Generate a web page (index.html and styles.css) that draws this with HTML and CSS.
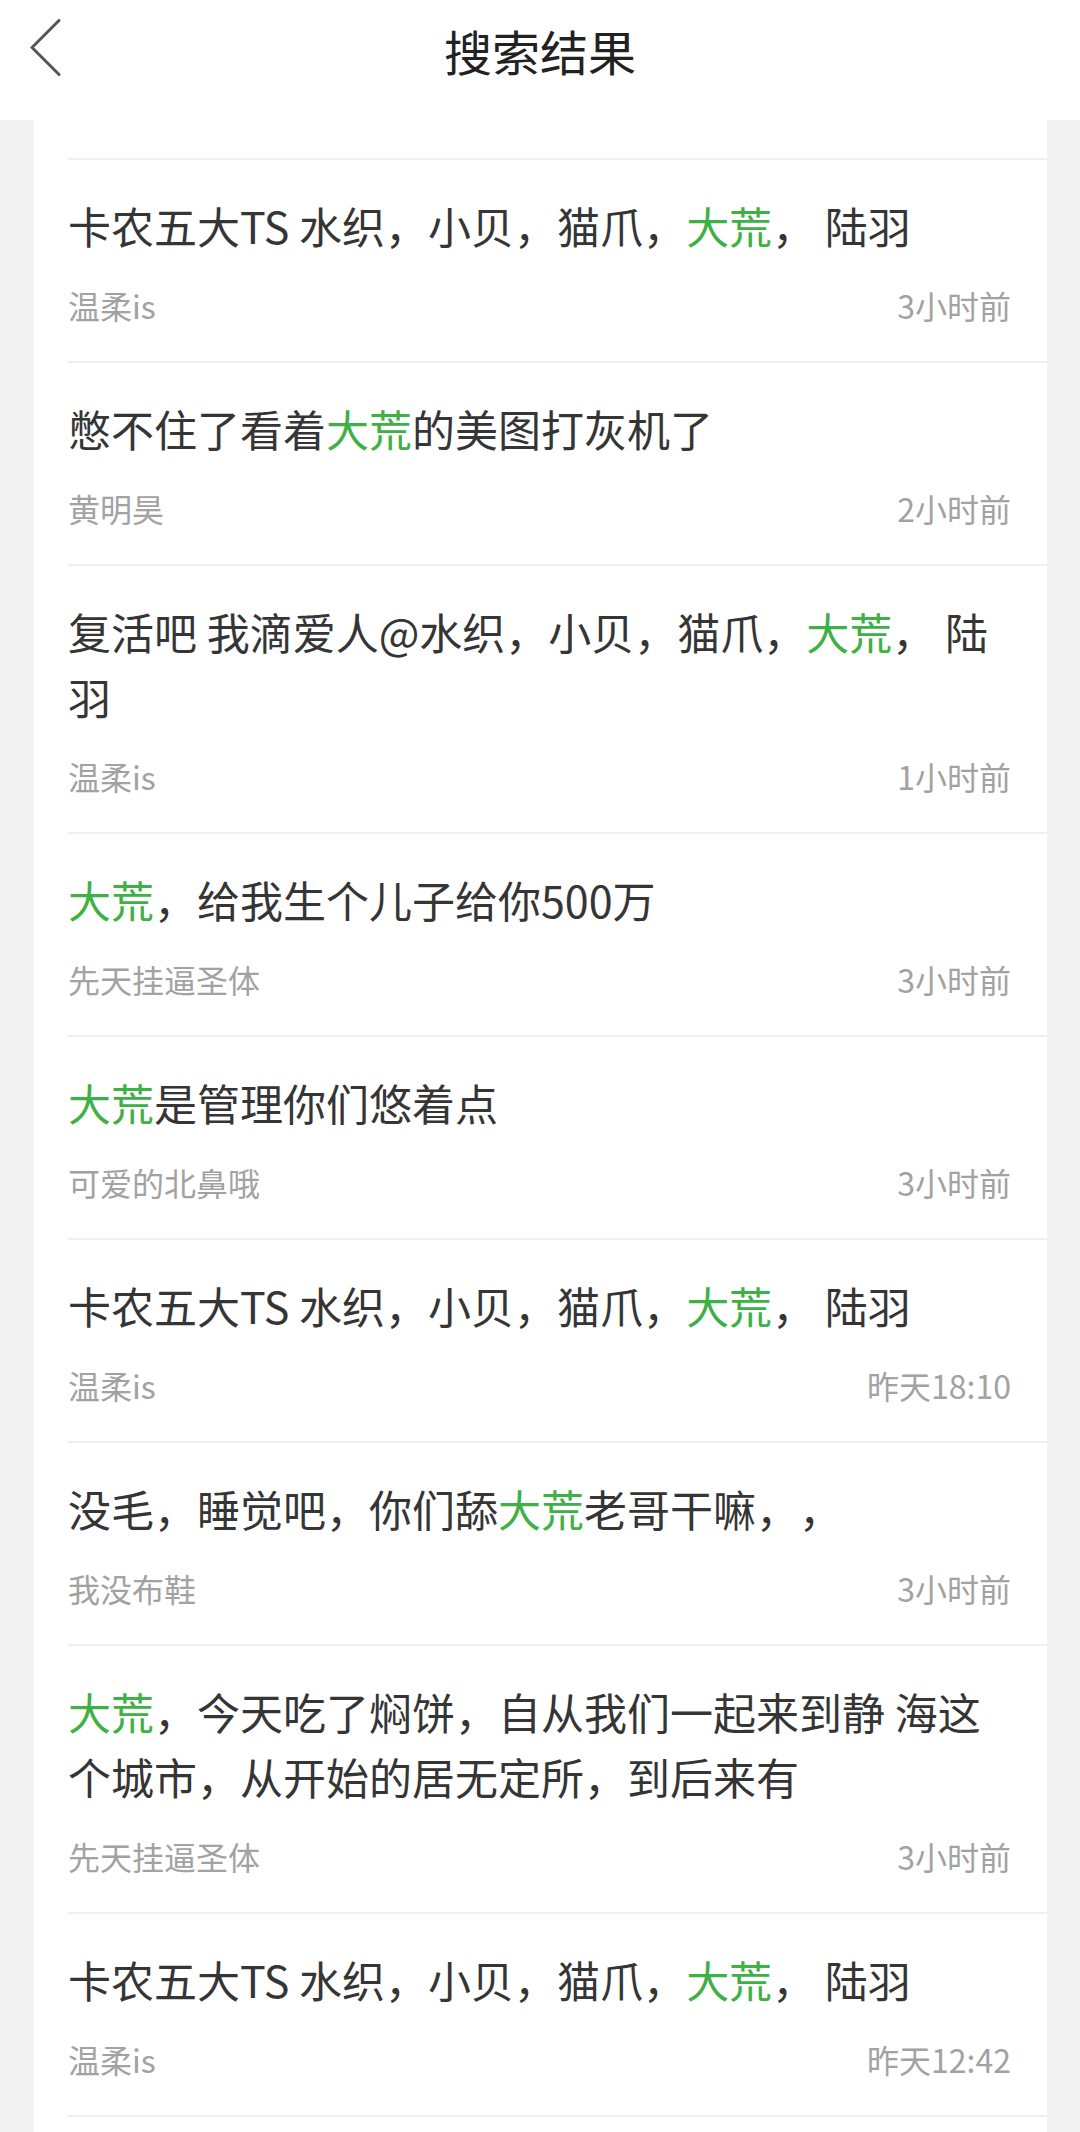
FILE: index.html
```html
<!DOCTYPE html>
<html lang="zh-CN">
<head>
<meta charset="utf-8">
<title>搜索结果</title>
<link rel="stylesheet" href="styles.css">
</head>
<body>
<header class="topbar">
  <div class="back">
    <svg class="back-icon" width="32" height="58" viewBox="0 0 32 58">
      <polyline points="29,1.5 2,28.5 29,55.5" fill="none" stroke="#555" stroke-width="3" stroke-linecap="round" stroke-linejoin="miter"/>
    </svg>
  </div>
  <h1 class="title">搜索结果</h1>
  <div class="spacer"></div>
</header>
<main class="card">
  <div class="item">
    <p class="text">卡农五大TS 水织，小贝，猫爪，<span class="hl">大荒</span>， 陆羽</p>
    <div class="meta"><span>温柔is</span><span>3小时前</span></div>
  </div>
  <div class="item">
    <p class="text">憋不住了看着<span class="hl">大荒</span>的美图打灰机了</p>
    <div class="meta"><span>黄明昊</span><span>2小时前</span></div>
  </div>
  <div class="item">
    <p class="text">复活吧 我滴爱人@水织，小贝，猫爪，<span class="hl">大荒</span>， 陆羽</p>
    <div class="meta"><span>温柔is</span><span>1小时前</span></div>
  </div>
  <div class="item">
    <p class="text"><span class="hl">大荒</span>，给我生个儿子给你500万</p>
    <div class="meta"><span>先天挂逼圣体</span><span>3小时前</span></div>
  </div>
  <div class="item">
    <p class="text"><span class="hl">大荒</span>是管理你们悠着点</p>
    <div class="meta"><span>可爱的北鼻哦</span><span>3小时前</span></div>
  </div>
  <div class="item">
    <p class="text">卡农五大TS 水织，小贝，猫爪，<span class="hl">大荒</span>， 陆羽</p>
    <div class="meta"><span>温柔is</span><span>昨天18:10</span></div>
  </div>
  <div class="item">
    <p class="text">没毛，睡觉吧，你们舔<span class="hl">大荒</span>老哥干嘛，，</p>
    <div class="meta"><span>我没布鞋</span><span>3小时前</span></div>
  </div>
  <div class="item">
    <p class="text"><span class="hl">大荒</span>，今天吃了焖饼，自从我们一起来到静 海这个城市，从开始的居无定所，到后来有</p>
    <div class="meta"><span>先天挂逼圣体</span><span>3小时前</span></div>
  </div>
  <div class="item">
    <p class="text">卡农五大TS 水织，小贝，猫爪，<span class="hl">大荒</span>， 陆羽</p>
    <div class="meta"><span>温柔is</span><span>昨天12:42</span></div>
  </div>
  <div class="item item-empty"></div>
</main>
</body>
</html>
```
FILE: styles.css
```css
html, body {
  margin: 0;
  padding: 0;
}
body {
  background: #f2f2f2;
  font-family: "Noto Sans CJK SC", "Noto Sans", sans-serif;
  width: 1080px;
  height: 2132px;
  overflow: hidden;
}
.topbar {
  display: grid;
  grid-template-columns: 140px 1fr 140px;
  height: 120px;
  background: #ffffff;
}
.back {
  padding-left: 30px;
  padding-top: 19px;
}
.back-icon {
  display: block;
}
.title {
  margin: 0;
  font-size: 48px;
  font-weight: 400;
  line-height: 100px;
  text-align: center;
  color: #222222;
}
.card {
  margin: 0 33px 0 34px;
  background: #ffffff;
  padding-top: 38px;
  min-height: 2000px;
}
.item {
  margin-left: 34px;
  border-top: 2px solid #efefef;
  padding: 33px 36px 36px 0;
}
.text {
  margin: 0;
  font-size: 43px;
  line-height: 65px;
  color: #353535;
  text-spacing-trim: space-all;
}
.hl {
  color: #3fb045;
}
.meta {
  display: flex;
  justify-content: space-between;
  margin-top: 27px;
  font-size: 32px;
  line-height: 40px;
  color: #a2a2a2;
}
.item-empty {
  padding: 0;
  height: 20px;
}
```
